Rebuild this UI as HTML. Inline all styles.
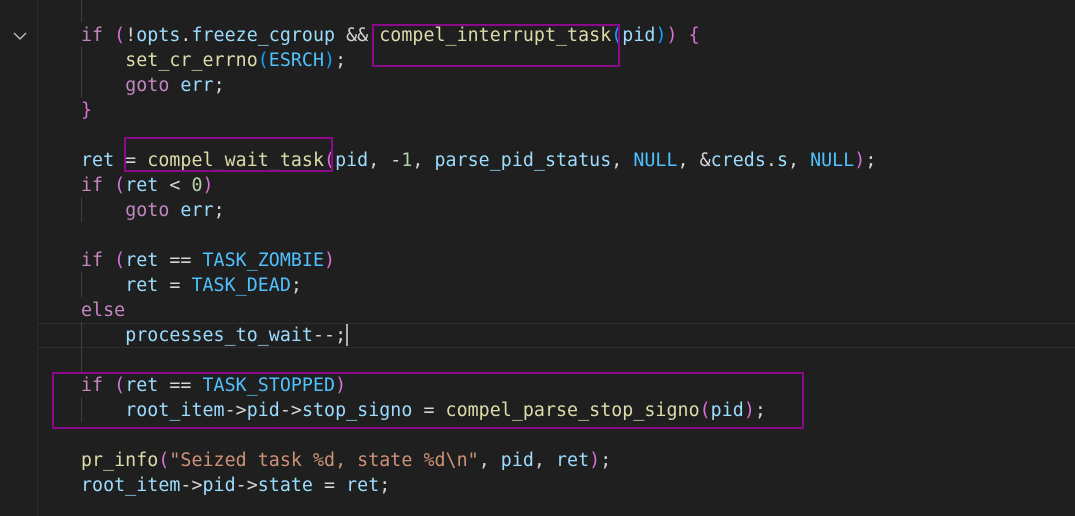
<!DOCTYPE html>
<html><head><style>
body{margin:0;width:1075px;height:516px;background:#1f1f1f;overflow:hidden;position:relative;font-family:"DejaVu Sans Mono","Liberation Mono",monospace;}
.gut{position:absolute;left:37px;top:0;width:1px;height:516px;background:#2b2b2b;}
.cur{position:absolute;left:38px;top:323px;width:1037px;height:23px;border-top:1px solid #2e2e2e;border-bottom:1px solid #2e2e2e;}
.code{position:absolute;left:81px;top:23px;font-size:18.27px;letter-spacing:0.05px;line-height:25px;color:#d4d4d4;white-space:pre;}
.g{position:absolute;width:1px;background:#404040;left:81px;}
.k{color:#c586c0}.p{color:#da70d6}.v{color:#9cdcfe}.f{color:#dcdcaa}.c{color:#4fc1ff}.s{color:#ce9178}.n{color:#b5cea8}.b{color:#179fff}
.box{position:absolute;border:2px solid #8b0a8b;box-sizing:border-box;}
.caret{position:absolute;left:346px;top:324px;width:2px;height:22px;background:#aeafad;}
</style></head><body>
<div class="gut"></div>
<div class="cur"></div>
<div class="g" style="top:0;height:22px"></div>
<div class="g" style="top:47px;height:50px"></div>
<div class="g" style="top:197px;height:25px"></div>
<div class="g" style="top:272px;height:25px"></div>
<div class="g" style="top:322px;height:50px"></div>
<div class="g" style="top:397px;height:25px"></div>
<svg style="position:absolute;left:13px;top:31px" width="14" height="10"><path d="M1 2 L7 8 L13 2" fill="none" stroke="#c5c5c5" stroke-width="1.3"/></svg>
<div class="code"><span class="k">if</span> <span class="p">(</span>!<span class="v">opts</span>.<span class="v">freeze_cgroup</span> &amp;&amp; <span class="f">compel_interrupt_task</span><span class="b">(</span><span class="v">pid</span><span class="b">)</span><span class="p">)</span> <span class="p">{</span>
    <span class="f">set_cr_errno</span><span class="b">(</span><span class="c">ESRCH</span><span class="b">)</span>;
    <span class="k">goto</span> <span class="v">err</span>;
<span class="p">}</span>

<span class="v">ret</span> = <span class="f">compel_wait_task</span><span class="p">(</span><span class="v">pid</span>, -<span class="n">1</span>, <span class="v">parse_pid_status</span>, <span class="c">NULL</span>, &amp;<span class="v">creds</span>.<span class="v">s</span>, <span class="c">NULL</span><span class="p">)</span>;
<span class="k">if</span> <span class="p">(</span><span class="v">ret</span> &lt; <span class="n">0</span><span class="p">)</span>
    <span class="k">goto</span> <span class="v">err</span>;

<span class="k">if</span> <span class="p">(</span><span class="v">ret</span> == <span class="c">TASK_ZOMBIE</span><span class="p">)</span>
    <span class="v">ret</span> = <span class="c">TASK_DEAD</span>;
<span class="k">else</span>
    <span class="v">processes_to_wait</span>--;

<span class="k">if</span> <span class="p">(</span><span class="v">ret</span> == <span class="c">TASK_STOPPED</span><span class="p">)</span>
    <span class="v">root_item</span>-&gt;<span class="v">pid</span>-&gt;<span class="v">stop_signo</span> = <span class="f">compel_parse_stop_signo</span><span class="p">(</span><span class="v">pid</span><span class="p">)</span>;

<span class="f">pr_info</span><span class="p">(</span><span class="s">"Seized task %d, state %d\n"</span>, <span class="v">pid</span>, <span class="v">ret</span><span class="p">)</span>;
<span class="v">root_item</span>-&gt;<span class="v">pid</span>-&gt;<span class="v">state</span> = <span class="v">ret</span>;</div>
<div class="caret"></div>
<div class="box" style="left:372px;top:24px;width:248px;height:43px"></div>
<div class="box" style="left:124px;top:137px;width:209px;height:35px"></div>
<div class="box" style="left:52px;top:372px;width:752px;height:57px"></div>
</body></html>
